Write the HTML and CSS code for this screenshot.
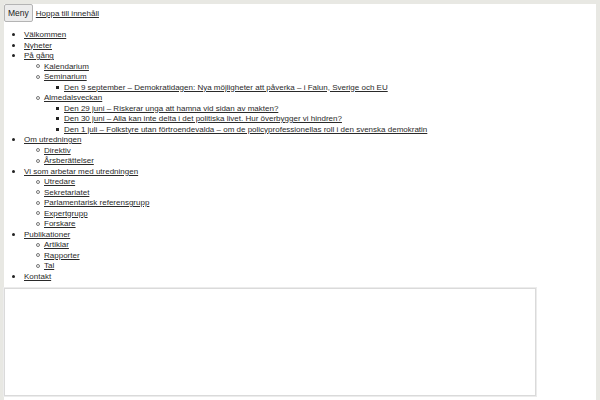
FILE: index.html
```html
<!DOCTYPE html>
<html lang="sv">
<head>
    <meta charset="UTF-8">
    <meta name="viewport" content="width=device-width, initial-scale=1.0">
    <title>Demokratiutredningen</title>
    <link rel="stylesheet" href="styles.css">
</head>
<body>
    <div class="page">
        <div class="topbar">
            <button class="menu-btn">Meny</button>
            <a href="#content">Hoppa till innehåll</a>
        </div>

        <ul class="nav">
            <li><a href="#">Välkommen</a></li>
            <li><a href="#">Nyheter</a></li>
            <li><a href="#">På gång</a>
                <ul>
                    <li><a href="#">Kalendarium</a></li>
                    <li><a href="#">Seminarium</a>
                        <ul>
                            <li><a href="#">Den 9 september – Demokratidagen: Nya möjligheter att påverka – i Falun, Sverige och EU</a></li>
                        </ul>
                    </li>
                    <li><a href="#">Almedalsveckan</a>
                        <ul>
                            <li><a href="#">Den 29 juni – Riskerar unga att hamna vid sidan av makten?</a></li>
                            <li><a href="#">Den 30 juni – Alla kan inte delta i det politiska livet. Hur överbygger vi hindren?</a></li>
                            <li><a href="#">Den 1 juli – Folkstyre utan förtroendevalda – om de policyprofessionellas roll i den svenska demokratin</a></li>
                        </ul>
                    </li>
                </ul>
            </li>
            <li><a href="#">Om utredningen</a>
                <ul>
                    <li><a href="#">Direktiv</a></li>
                    <li><a href="#">Årsberättelser</a></li>
                </ul>
            </li>
            <li><a href="#">Vi som arbetar med utredningen</a>
                <ul>
                    <li><a href="#">Utredare</a></li>
                    <li><a href="#">Sekretariatet</a></li>
                    <li><a href="#">Parlamentarisk referensgrupp</a></li>
                    <li><a href="#">Expertgrupp</a></li>
                    <li><a href="#">Forskare</a></li>
                </ul>
            </li>
            <li><a href="#">Publikationer</a>
                <ul>
                    <li><a href="#">Artiklar</a></li>
                    <li><a href="#">Rapporter</a></li>
                    <li><a href="#">Tal</a></li>
                </ul>
            </li>
            <li><a href="#">Kontakt</a></li>
        </ul>

        <div class="frame" id="content"></div>
    </div>
</body>
</html>
```

FILE: styles.css
```css
body {
    margin: 0;
    padding: 4px 4px 0;
    background-color: #e8e8e3;
    font-family: "Liberation Sans", Arial, sans-serif;
    font-size: 8px;
    color: #2a2a2a;
}
.page {
    background-color: #fff;
    min-height: 400px;
}
a {
    color: #2a2a2a;
}
.topbar {
    display: flex;
    align-items: center;
    gap: 3px;
    height: 18px;
}
.menu-btn {
    height: 18px;
    padding: 0 3px;
    font-family: inherit;
    font-size: 8.5px;
    color: #222;
    background-color: #ececec;
    border: 1px solid #b4b4b4;
    border-radius: 2px;
}
.nav {
    margin: 8px 0 0;
    padding-left: 20px;
    line-height: 10.5px;
}
.nav ul {
    margin: 0;
    padding-left: 20px;
}
.nav li {
    list-style: none;
}
.nav li::before {
    content: "";
    display: inline-block;
    width: 3px;
    height: 3px;
    margin: 0 9px 0 -12px;
    border-radius: 50%;
    background-color: #222;
    vertical-align: middle;
}
.nav ul li::before {
    width: 2px;
    height: 2px;
    margin: 0 4px 0 -8px;
    border: 1px solid #777;
    background-color: transparent;
}
.nav ul ul li::before {
    width: 3px;
    height: 3px;
    margin: 0 5px 0 -8px;
    border: 0;
    border-radius: 0;
    background-color: #222;
}
.frame {
    width: 530px;
    height: 106px;
    margin-top: 6px;
    border: 1px solid #dadada;
    box-shadow: 0 0 0 1px #ececec;
}
```
